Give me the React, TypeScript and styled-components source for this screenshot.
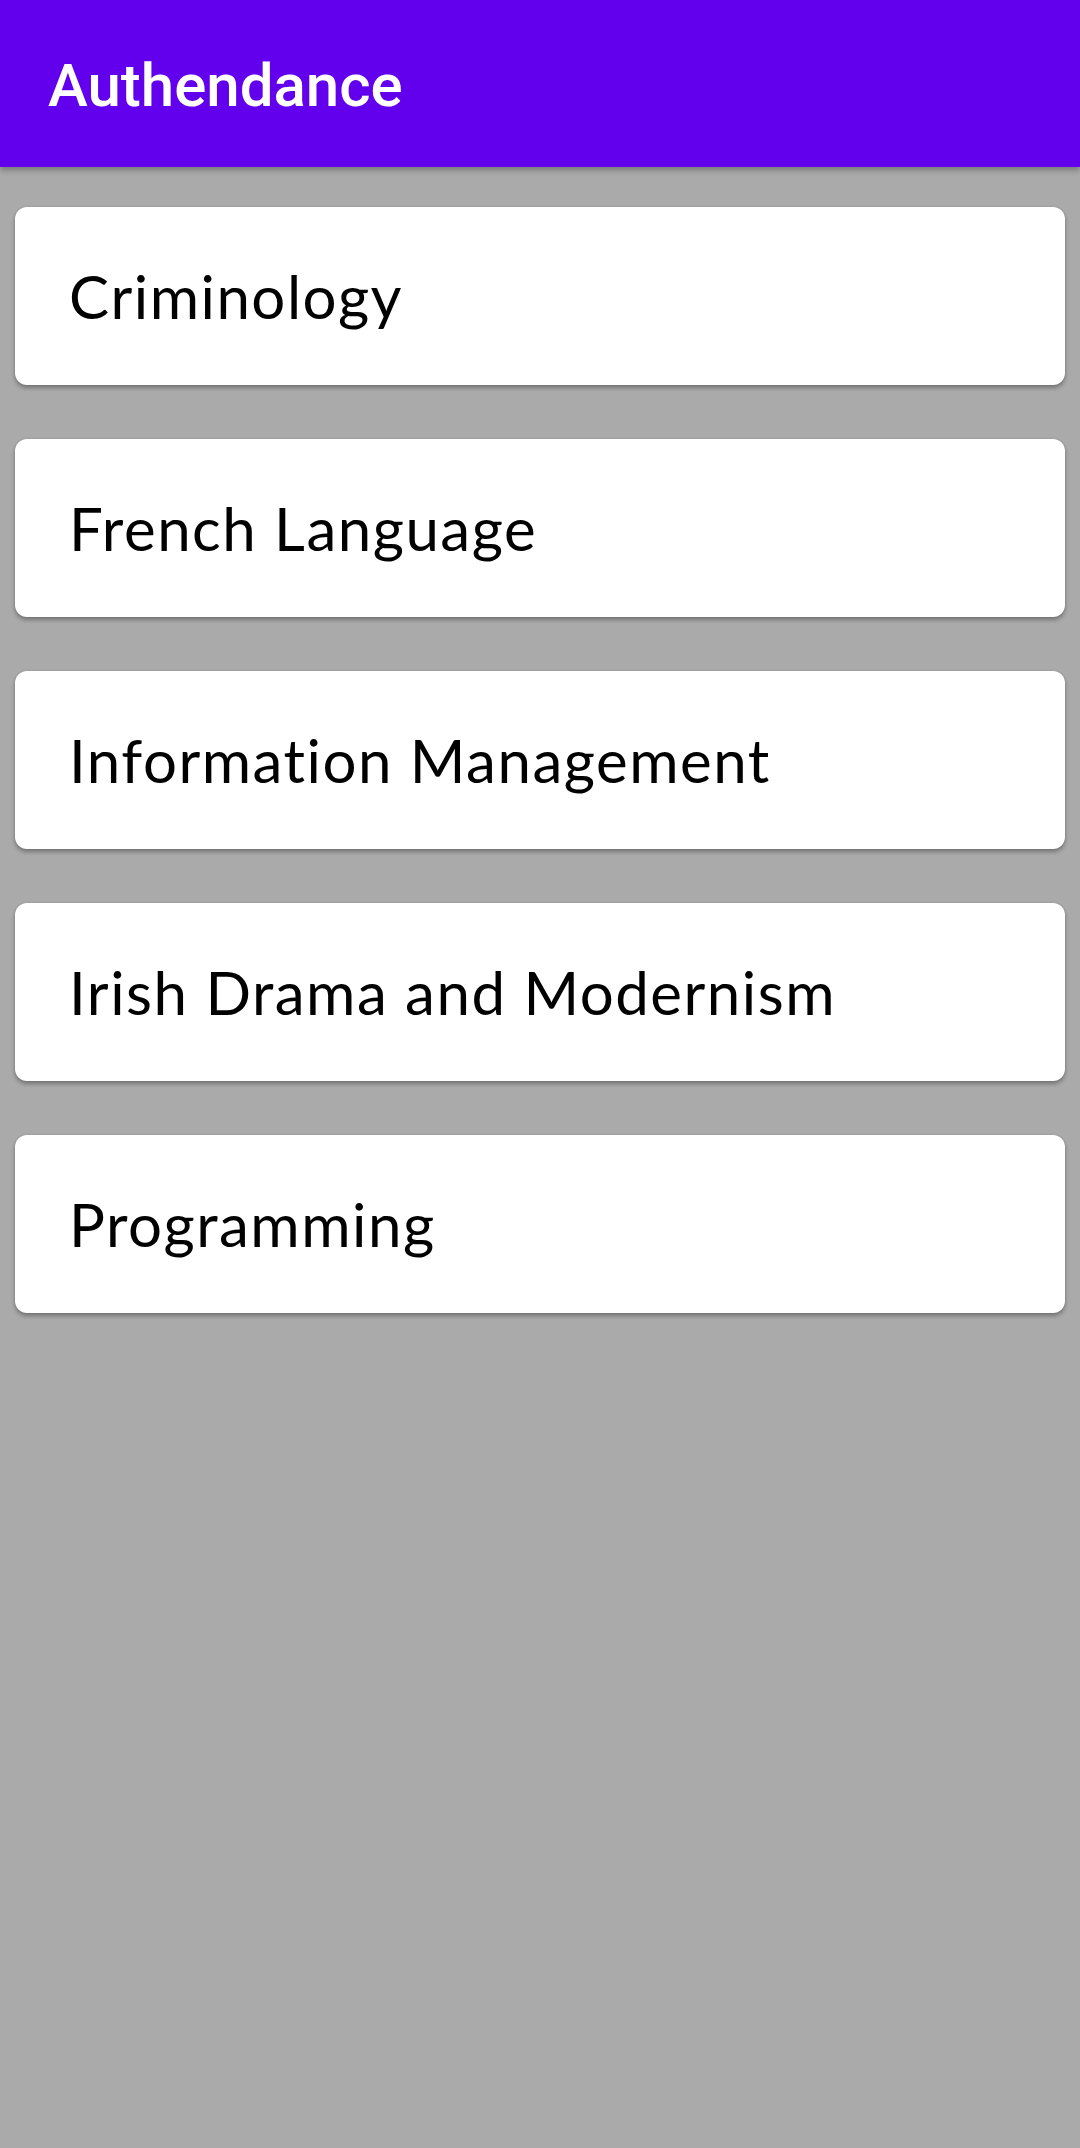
import React from "react";
import styled, { createGlobalStyle } from "styled-components";

const Global = createGlobalStyle`
  html, body {
    margin: 0;
    padding: 0;
    background: #aaaaaa;
  }
  #root {
    min-height: 2148px;
  }
`;

const Page = styled.div`
  min-height: 2148px;
  background: #aaaaaa;
  display: flex;
  flex-direction: column;
`;

const AppBar = styled.header`
  height: 167px;
  background: #6200ee;
  display: flex;
  align-items: center;
  padding-left: 48px;
  box-sizing: border-box;
  box-shadow: 0 3px 6px rgba(0, 0, 0, 0.3);
  position: relative;
  z-index: 1;
`;

const Title = styled.h1`
  margin: 0;
  color: #ffffff;
  font-family: Roboto, "Liberation Sans", sans-serif;
  font-weight: 500;
  font-size: 60px;
  letter-spacing: 0;
  transform: translateY(2px);
`;

const List = styled.main`
  display: flex;
  flex-direction: column;
  gap: 54px;
  padding: 40px 15px 0 15px;
`;

const Card = styled.div`
  height: 178px;
  background: #ffffff;
  border-radius: 12px;
  box-shadow: 0 3px 4px rgba(0, 0, 0, 0.3), 0 0 2px rgba(0, 0, 0, 0.15);
  display: flex;
  align-items: center;
  padding-left: 54px;
  box-sizing: border-box;
`;

const CourseName = styled.span`
  font-family: Lato, "Open Sans", sans-serif;
  font-size: 60px;
  font-weight: 400;
  letter-spacing: 1.5px;
  color: #000000;
`;

const courses = [
  "Criminology",
  "French Language",
  "Information Management",
  "Irish Drama and Modernism",
  "Programming",
];

export default function App() {
  return (
    <>
      <Global />
      <Page>
        <AppBar>
          <Title>Authendance</Title>
        </AppBar>
        <List>
          {courses.map((c) => (
            <Card key={c}>
              <CourseName>{c}</CourseName>
            </Card>
          ))}
        </List>
      </Page>
    </>
  );
}
